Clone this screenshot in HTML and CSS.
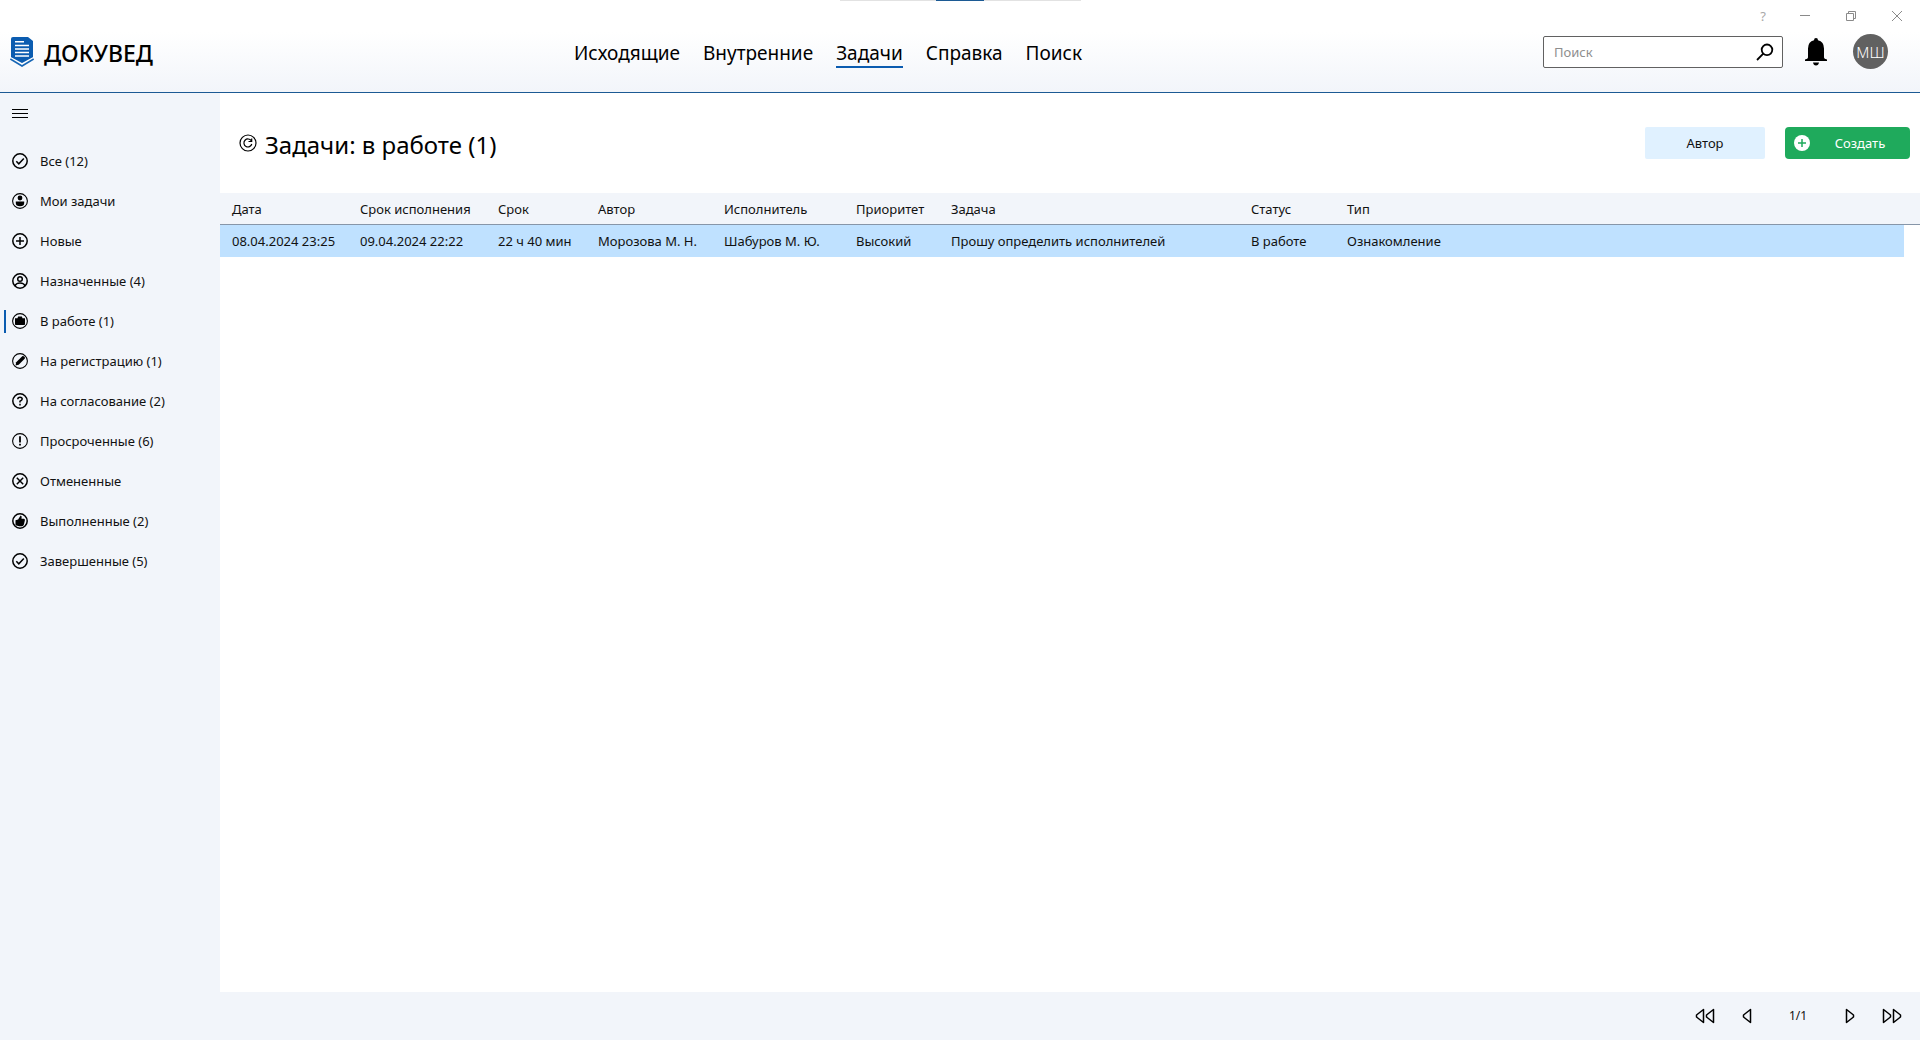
FILE: index.html
```html
<!DOCTYPE html>
<html lang="ru">
<head>
<meta charset="utf-8">
<meta name="viewport" content="width=device-width, initial-scale=1">
<title>Докувед</title>
<link rel="stylesheet" href="styles.css">
</head>
<body>
<div class="app">
  <header class="header">
    <div class="drag-bar"></div>
    <div class="window-controls">
      <button type="button" class="window-button" aria-label="Помощь">?</button>
      <button type="button" class="window-button" aria-label="Свернуть"><svg width="10" height="10" viewBox="0 0 10 10"><path d="M0 4.500h10"/></svg></button>
      <button type="button" class="window-button" aria-label="Восстановить"><svg width="10" height="10" viewBox="0 0 10 10"><path d="M.5 2.500h7v7h-7zM2.500 2.500v-2h7v7h-2"/></svg></button>
      <button type="button" class="window-button" aria-label="Закрыть"><svg width="10" height="10" viewBox="0 0 10 10"><path d="M0 0l10 10M10 0L0 10"/></svg></button>
    </div>
    <a class="brand" href="#">
      <svg width="24" height="30" viewBox="0 0 24 30">
        <path fill="#0b5cb0" d="M3 0h15l5 4v17l-11 6L1 21V2q0-2 2-2z"/>
        <path fill="none" stroke="#fff" stroke-width="1.500" d="M5 4.800h9M5 8.500h14M5 12h14M5 15.500h14M5 19h14"/>
        <path fill="none" stroke="#fff" stroke-width="1.500" d="M0 20.500l12 6.500 12-6.500"/>
        <path fill="none" stroke="#1766b5" stroke-width="1.600" d="M.3 22l11.700 7 11.700-7"/>
      </svg>
      <span class="brand-name">ДОКУВЕД</span>
    </a>
    <nav class="nav" aria-label="Разделы">
      <a class="nav-link" href="#">Исходящие</a>
      <a class="nav-link" href="#">Внутренние</a>
      <a class="nav-link nav-link-active" href="#" aria-current="page">Задачи</a>
      <a class="nav-link" href="#">Справка</a>
      <a class="nav-link" href="#">Поиск</a>
    </nav>
    <div class="tools">
      <form class="search">
        <input class="search-input" type="text" placeholder="Поиск" aria-label="Поиск">
        <button class="icon-button" type="button" aria-label="Найти"><svg width="18" height="18" viewBox="0 0 18 18" fill="none" stroke="#000" stroke-width="1.800"><circle cx="11" cy="6.800" r="5.300"/><path d="M7.300 10.600L1 17"/></svg></button>
      </form>
      <button class="icon-button" type="button" aria-label="Уведомления"><svg width="22" height="28" viewBox="0 0 22 28"><path d="M11 0q2 0 2 2.200 6 1.500 6 8.300v9q0 1.500 3 2v1.500H0v-1.500q3-.5 3-2v-9Q3 3.700 9 2.200 9 0 11 0zM8 24.500h6q-.5 3-3 3t-3-3z"/></svg></button>
      <button class="avatar" type="button">МШ</button>
    </div>
  </header>

  <aside class="sidebar">
    <button class="menu-button" type="button" aria-label="Меню"><svg width="16" height="10" viewBox="0 0 16 10" stroke="#000"><path d="M0 .5h16M0 4.500h16M0 8.500h16"/></svg></button>
    <nav class="side-nav" aria-label="Задачи">
      <a class="side-link" href="#"><svg class="icon" viewBox="0 0 16 16"><circle cx="8" cy="8" r="7.200"/><path d="M4.300 8.200l2.500 2.600 5-5.300"/></svg>Все (12)</a>
      <a class="side-link" href="#"><svg class="icon" viewBox="0 0 16 16"><circle cx="8" cy="8" r="7.400" stroke-width="1.100"/><circle class="solid" cx="8" cy="5" r="2.400"/><path class="solid" d="M3.800 8.500h8.400v1.500q0 3.200-4.200 3.200T3.800 10z"/></svg>Мои задачи</a>
      <a class="side-link" href="#"><svg class="icon" viewBox="0 0 16 16"><circle cx="8" cy="8" r="7.200"/><path d="M8 4v8M4 8h8"/></svg>Новые</a>
      <a class="side-link" href="#"><svg class="icon" viewBox="0 0 16 16"><circle cx="8" cy="8" r="7.200"/><circle cx="8" cy="6" r="2.300"/><path d="M3 13q1-3 5-3t5 3"/></svg>Назначенные (4)</a>
      <a class="side-link side-link-active" href="#" aria-current="page"><svg class="icon" viewBox="0 0 16 16"><circle cx="8" cy="8" r="7.400" stroke-width="1.100"/><path class="solid" d="M3 5.200h2.500l.6-1.600h3.800l.6 1.600H13v6q0 .8-.8.800H3.800q-.8 0-.8-.8z"/></svg>В работе (1)</a>
      <a class="side-link" href="#"><svg class="icon" viewBox="0 0 16 16"><circle cx="8" cy="8" r="7.400" stroke-width="1.100"/><path class="solid" d="M3.500 12.500l.7-3.200 6.300-6.200q2.600 0 2.400 2.400l-6.200 6.200z"/></svg>На регистрацию (1)</a>
      <a class="side-link" href="#"><svg class="icon" viewBox="0 0 16 16"><circle cx="8" cy="8" r="7.200"/><path d="M5.800 6.200Q5.800 4.200 8 4.200t2.200 1.900Q10.200 7.200 8 8.200v1.300M8 10.800v1.600"/></svg>На согласование (2)</a>
      <a class="side-link" href="#"><svg class="icon" viewBox="0 0 16 16"><circle cx="8" cy="8" r="7.400" stroke-width="1.100"/><path stroke-width="1.800" d="M8 3.200v6.200M8 10.800v1.800"/></svg>Просроченные (6)</a>
      <a class="side-link" href="#"><svg class="icon" viewBox="0 0 16 16"><circle cx="8" cy="8" r="7.200"/><path d="M4.800 4.800l6.400 6.400M11.200 4.800l-6.400 6.400"/></svg>Отмененные</a>
      <a class="side-link" href="#"><svg class="icon" viewBox="0 0 16 16"><circle cx="8" cy="8" r="7.200"/><path class="solid" d="M3.500 7.300l2.600-.8L8.600 2.500q1.700.4.900 3.300h2.400q1.200.3 1 1.500l-1 4.200q-.5 1.700-2 1.700H7.200l-3.700-1z"/></svg>Выполненные (2)</a>
      <a class="side-link" href="#"><svg class="icon" viewBox="0 0 16 16"><circle cx="8" cy="8" r="7.200"/><path d="M4.300 8.200l2.500 2.600 5-5.300"/></svg>Завершенные (5)</a>
    </nav>
  </aside>

  <main class="main">
    <div class="toolbar">
      <button class="icon-button refresh" type="button" aria-label="Обновить"><svg width="18" height="18" viewBox="0 0 18 18" fill="none" stroke="#000" stroke-width="1.200"><circle cx="9" cy="9" r="8"/><path d="M12.300 6.800A4 4 0 1 0 12.800 10M12.700 4.500v3H9.500"/></svg></button>
      <h1 class="title">Задачи: в работе (1)</h1>
      <button class="button button-author" type="button">Автор</button>
      <button class="button button-create" type="button"><svg width="16" height="16" viewBox="0 0 16 16"><circle cx="8" cy="8" r="8" fill="#fff"/><path d="M8 4v8M4 8h8" stroke="#1faa5c" stroke-width="1.500"/></svg><span class="button-label">Создать</span></button>
    </div>
    <table class="tasks">
      <colgroup><col class="col-date"><col class="col-due"><col class="col-left"><col class="col-author"><col class="col-assignee"><col class="col-priority"><col class="col-task"><col class="col-status"><col><col class="col-scroll"></colgroup>
      <thead>
        <tr><th>Дата</th><th>Срок исполнения</th><th>Срок</th><th>Автор</th><th>Исполнитель</th><th>Приоритет</th><th>Задача</th><th>Статус</th><th>Тип</th><th></th></tr>
      </thead>
      <tbody>
        <tr><td>08.04.2024 23:25</td><td>09.04.2024 22:22</td><td>22 ч 40 мин</td><td>Морозова М. Н.</td><td>Шабуров М. Ю.</td><td>Высокий</td><td>Прошу определить исполнителей</td><td>В работе</td><td>Ознакомление</td><td class="scroll-cell"></td></tr>
      </tbody>
    </table>
  </main>

  <footer class="pager">
    <button class="icon-button" type="button" aria-label="Первая страница"><svg class="arrow arrow-double" viewBox="0 0 20 16"><path d="M8.500 1.500v13L1.500 9V7zM18.500 1.500v13l-7-5.500V7z"/></svg></button>
    <button class="icon-button" type="button" aria-label="Предыдущая страница"><svg class="arrow" viewBox="0 0 10 16"><path d="M8.500 1.500v13L1.500 9V7z"/></svg></button>
    <span class="page-number">1/1</span>
    <button class="icon-button" type="button" aria-label="Следующая страница"><svg class="arrow" viewBox="0 0 10 16"><path d="M1.500 1.500v13l7-5.500V7z"/></svg></button>
    <button class="icon-button" type="button" aria-label="Последняя страница"><svg class="arrow arrow-double" viewBox="0 0 20 16"><path d="M1.500 1.500v13l7-5.500V7zM11.500 1.500v13l7-5.500V7z"/></svg></button>
  </footer>
</div>
</body>
</html>
```
FILE: styles.css
```css
* {
  box-sizing: border-box;
}

body {
  margin: 0;
  font: 13px/20px "Noto Sans", "Open Sans", sans-serif;
  color: #111;
  background: #fff;
}

a {
  color: inherit;
  text-decoration: none;
}

button,
input {
  margin: 0;
  padding: 0;
  border: 0;
  background: none;
  color: inherit;
  font: inherit;
}

svg {
  display: block;
  flex: none;
}

.app {
  display: grid;
  grid-template: auto 1fr 48px / 220px 1fr;
  min-height: 100vh;
}

/* Header */
.header {
  position: relative;
  grid-column: 1 / -1;
  display: grid;
  grid-template: 32px 60px / 574px 1fr auto;
  border-bottom: 1px solid #1c5a94;
  background: linear-gradient(#fff 32px, #f2f5fa);
}

.drag-bar {
  position: absolute;
  top: 0;
  left: 840px;
  width: 241px;
  height: 1px;
  background: linear-gradient(90deg, #e2e2e2 96px, #1c5a94 96px 144px, #e2e2e2 144px);
}

.window-controls {
  grid-column: 1 / -1;
  display: flex;
  justify-content: flex-end;
}

.window-button {
  display: grid;
  place-items: center;
  width: 46px;
  height: 32px;
  color: #a8a8a8;
}

.window-button:first-child {
  width: 38px;
}

.window-button svg {
  fill: none;
  stroke: #8a8a8a;
}

.brand {
  display: flex;
  align-items: flex-start;
  gap: 10px;
  padding: 5px 0 0 10px;
}

.brand-name {
  font-size: 23px;
  line-height: 32px;
  font-weight: 500;
  color: #000;
}

.nav {
  display: flex;
  align-items: flex-start;
  gap: 23px;
  padding-top: 8px;
}

.nav-link {
  height: 28px;
  font-size: 19px;
  line-height: 26px;
  color: #000;
}

.nav-link-active {
  border-bottom: 2px solid #0b5cb0;
}

.tools {
  display: flex;
  align-items: flex-start;
  padding: 2px 32px 0 0;
}

.search {
  display: flex;
  align-items: center;
  width: 240px;
  height: 32px;
  margin: 2px 22px 0 0;
  padding: 0 8px 0 10px;
  border: 1px solid #616161;
  border-radius: 2px;
  background: #fff;
}

.search-input {
  flex: 1;
  min-width: 0;
  outline: 0;
}

.search-input::placeholder {
  color: #8e8e8e;
}

.tools > .icon-button {
  margin: 4px 26px 0 0;
}

.avatar {
  width: 35px;
  height: 35px;
  border-radius: 50%;
  background: #616161;
  color: #fff;
  font-size: 15px;
  font-weight: 300;
}

/* Sidebar */
.sidebar {
  background: #f2f5fa;
}

.menu-button {
  display: block;
  padding: 16px 12px;
}

.side-nav {
  display: grid;
  padding-top: 6px;
}

.side-link {
  display: flex;
  align-items: center;
  gap: 12px;
  height: 40px;
  padding-left: 12px;
}

.side-link-active {
  background: linear-gradient(#0b5cb0, #0b5cb0) 4px 50% / 2px 23px no-repeat;
}

.icon {
  width: 16px;
  height: 16px;
  fill: none;
  stroke: #000;
  stroke-width: 1.5;
}

.icon .solid {
  fill: #000;
  stroke: none;
}

/* Main area */
.toolbar {
  display: flex;
  align-items: center;
  height: 100px;
  padding: 0 10px 0 19px;
}

.refresh {
  margin-right: 8px;
}

.title {
  flex: 1;
  margin: 4px 0 0;
  font-size: 24px;
  line-height: 32px;
  font-weight: 400;
  color: #000;
}

.button {
  height: 32px;
  border-radius: 2px;
}

.button-author {
  width: 120px;
  background: #e0f1ff;
}

.button-create {
  display: flex;
  align-items: center;
  width: 125px;
  margin-left: 20px;
  padding: 0 9px;
  border-radius: 4px;
  background: #1faa5c;
  color: #fff;
}

.button-label {
  flex: 1;
  padding-left: 9px;
}

.tasks {
  width: 100%;
  table-layout: fixed;
  border-collapse: separate;
  border-spacing: 0;
}

.tasks th,
.tasks td {
  height: 32px;
  padding: 0 0 0 12px;
  font-weight: 400;
  text-align: left;
  white-space: nowrap;
}

.tasks th {
  border-bottom: 1px solid #8796a8;
  background: #f2f5fa;
}

.tasks td {
  background: #bfe1ff;
}

.tasks .scroll-cell {
  background: #fff;
}

.col-date { width: 128px; }
.col-due { width: 138px; }
.col-left { width: 100px; }
.col-author { width: 126px; }
.col-assignee { width: 132px; }
.col-priority { width: 95px; }
.col-task { width: 300px; }
.col-status { width: 96px; }
.col-scroll { width: 16px; }

/* Pager */
.pager {
  grid-column: 1 / -1;
  display: flex;
  align-items: center;
  justify-content: flex-end;
  padding-right: 18px;
  background: #f2f5fa;
}

.arrow {
  width: 10px;
  height: 16px;
  margin-left: 27px;
  fill: none;
  stroke: #000;
  stroke-width: 1.5;
  stroke-linejoin: round;
}

.arrow-double {
  width: 20px;
}

.page-number {
  width: 40px;
  margin-left: 26px;
  font-size: 12px;
  text-align: center;
}
```
